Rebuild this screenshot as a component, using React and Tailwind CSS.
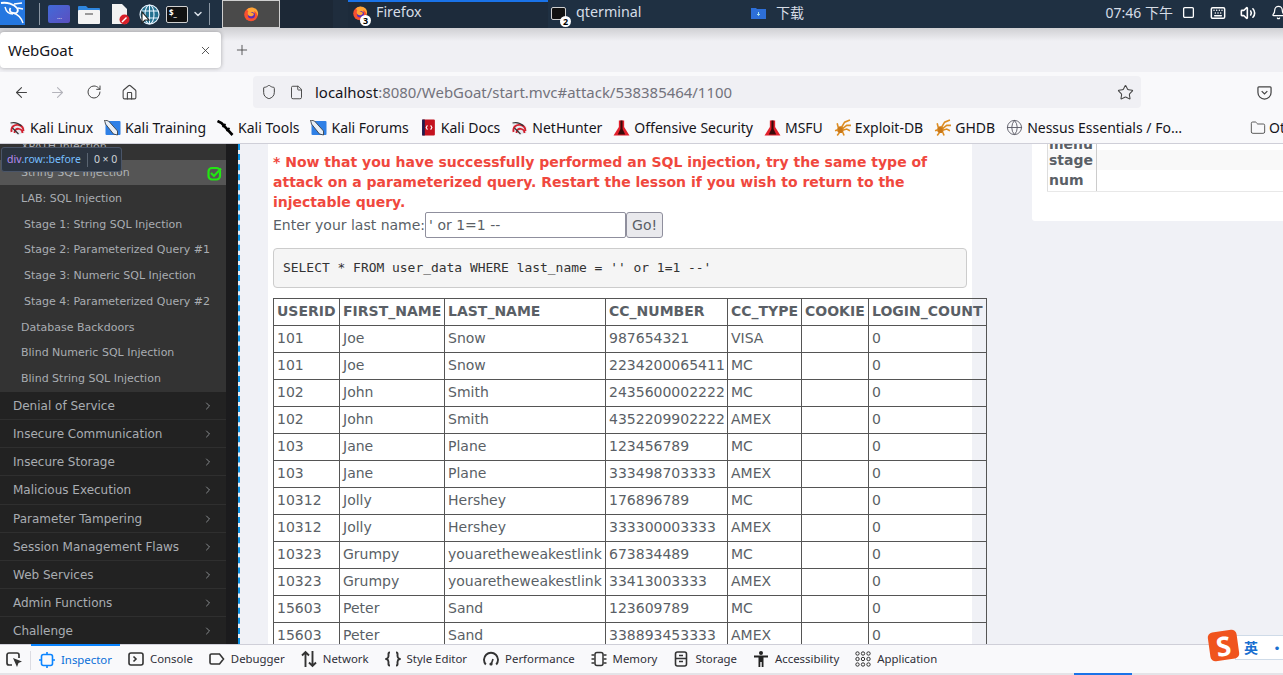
import { ArrowLeft, ArrowRight, RotateCw, House, Shield, File, Star, X, Plus, Folder, Globe, ChevronRight, ChevronDown, Volume2, Bell, Keyboard, Square } from 'lucide-react';

const chrome = { fontFamily: '"Noto Sans", sans-serif' };

const bookmarks = [
  ['dragon', 'Kali Linux'],
  ['pen', 'Kali Training'],
  ['tools', 'Kali Tools'],
  ['pen', 'Kali Forums'],
  ['docs', 'Kali Docs'],
  ['dragon', 'NetHunter'],
  ['flask', 'Offensive Security'],
  ['flask', 'MSFU'],
  ['spider', 'Exploit-DB'],
  ['spider', 'GHDB'],
  ['globe', 'Nessus Essentials / Fo…'],
];

const stages = [
  ['LAB: SQL Injection', false],
  ['Stage 1: String SQL Injection', true],
  ['Stage 2: Parameterized Query #1', true],
  ['Stage 3: Numeric SQL Injection', true],
  ['Stage 4: Parameterized Query #2', true],
  ['Database Backdoors', false],
  ['Blind Numeric SQL Injection', false],
  ['Blind String SQL Injection', false],
];

const categories = [
  'Denial of Service',
  'Insecure Communication',
  'Insecure Storage',
  'Malicious Execution',
  'Parameter Tampering',
  'Session Management Flaws',
  'Web Services',
  'Admin Functions',
  'Challenge',
];

const columns = ['USERID', 'FIRST_NAME', 'LAST_NAME', 'CC_NUMBER', 'CC_TYPE', 'COOKIE', 'LOGIN_COUNT'];

const rows = [
  ['101', 'Joe', 'Snow', '987654321', 'VISA'],
  ['101', 'Joe', 'Snow', '2234200065411', 'MC'],
  ['102', 'John', 'Smith', '2435600002222', 'MC'],
  ['102', 'John', 'Smith', '4352209902222', 'AMEX'],
  ['103', 'Jane', 'Plane', '123456789', 'MC'],
  ['103', 'Jane', 'Plane', '333498703333', 'AMEX'],
  ['10312', 'Jolly', 'Hershey', '176896789', 'MC'],
  ['10312', 'Jolly', 'Hershey', '333300003333', 'AMEX'],
  ['10323', 'Grumpy', 'youaretheweakestlink', '673834489', 'MC'],
  ['10323', 'Grumpy', 'youaretheweakestlink', '33413003333', 'AMEX'],
  ['15603', 'Peter', 'Sand', '123609789', 'MC'],
  ['15603', 'Peter', 'Sand', '338893453333', 'AMEX'],
];

const devtools = [
  ['inspector', 'Inspector'],
  ['console', 'Console'],
  ['debugger', 'Debugger'],
  ['network', 'Network'],
  ['style', 'Style Editor'],
  ['performance', 'Performance'],
  ['memory', 'Memory'],
  ['storage', 'Storage'],
  ['a11y', 'Accessibility'],
  ['application', 'Application'],
];

function FirefoxIcon({ size = 16 }) {
  return (
    <svg width={size} height={size} viewBox="0 0 16 16">
      <circle cx="8" cy="8.5" r="6.8" fill="#f9502f" />
      <circle cx="8.4" cy="9" r="3.6" fill="#5b2bb5" />
      <path d="M4 3.5C6 .8 11 .6 13.6 3.6c1.6 1.8 1.9 4.6 1 6.6-.2-2.4-1.4-4.4-3.6-5.2.6 1 .6 1.8.2 2.4C10.2 6 8.5 5.7 7.6 6.5c1.4-.1 2.9.5 3.3 2-.8 2-3.7 2.3-5.3 1C4.4 8.5 4.5 6 5.4 5 4.7 5 4.2 4.4 4 3.5z" fill="#ffa436" />
    </svg>
  );
}

function BookmarkIcon({ kind }) {
  if (kind === 'dragon') {
    return (
      <svg width="17" height="16" viewBox="0 0 16 16" fill="none">
        <path d="M1 4h11l3 3v6L8 15 2 11z" fill="#e8e8ee" />
        <path d="M2 12c-1-5 3-8 7-7 3 .5 5 3 5 6M5 13c0-3 2-5 5-4 2 .5 3 2 3 4" stroke="#d3202e" strokeWidth="1.8" />
        <path d="M1 3c4-1 8 0 11 3M3 8l6 6" stroke="#333" strokeWidth="1.1" />
      </svg>
    );
  }
  if (kind === 'pen') {
    return (
      <svg width="17" height="16" viewBox="0 0 16 16">
        <rect x="1" y="1" width="15" height="14" rx="1" fill="#2f80e6" />
        <path d="M0 0l4 1 9 10 0 4-4-1L1 4z" fill="#e8eef6" stroke="#333" strokeWidth="0.8" />
      </svg>
    );
  }
  if (kind === 'tools') {
    return (
      <svg width="17" height="16" viewBox="0 0 16 16" fill="none">
        <path d="M0 1l4 2 11 12" stroke="#000" strokeWidth="2.6" />
        <path d="M5 7l3-3M9 11l3-3" stroke="#000" strokeWidth="1.8" />
      </svg>
    );
  }
  if (kind === 'docs') {
    return (
      <svg width="17" height="17" viewBox="0 0 16 16">
        <rect x="2" y="0.5" width="12" height="15" rx="1" fill="#c4121f" />
        <rect x="2" y="0.5" width="2.5" height="15" fill="#1c1c50" />
        <path d="M7 6L5.8 8 7 10M10 6l1.2 2L10 10" stroke="#fff" strokeWidth="1" fill="none" />
      </svg>
    );
  }
  if (kind === 'flask') {
    return (
      <svg width="17" height="18" viewBox="0 0 16 16">
        <path d="M5.5 1h5v6l5 8H0.5l5-8z" fill="#e2202c" />
        <path d="M7 1h2v8l2.5 5h-7L7 9z" fill="#3a0a0a" />
      </svg>
    );
  }
  if (kind === 'spider') {
    return (
      <svg width="17" height="17" viewBox="0 0 16 16" fill="none" stroke="#dd8d22" strokeWidth="1.5">
        <ellipse cx="6" cy="10" rx="3" ry="3.2" fill="#c9781a" stroke="none" />
        <path d="M7 8l3-5 5-2M8 9l4-3 4 0M8 10.5l4-1 3 1.5M4 8L3 4M4 10l-3 1M5 13l-2 2.5M8 12l1.5 3.5" />
      </svg>
    );
  }
  return <Globe size={17} strokeWidth={1.3} className="text-[#5b5b66]" />;
}

function DevIcon({ kind }) {
  if (kind === 'inspector') {
    return (
      <svg width="16" height="16" viewBox="0 0 16 16" fill="none" stroke="#0a84ff" strokeWidth="1.6">
        <rect x="2.5" y="2.5" width="11" height="11" rx="2" />
        <path d="M8 0v2.500M8 13.500V16M0 8h2.500M13.500 8H16" />
      </svg>
    );
  }
  if (kind === 'console') {
    return (
      <svg width="16" height="16" viewBox="0 0 16 16" fill="none" stroke="#333" strokeWidth="1.6">
        <rect x="1" y="2" width="14" height="12" rx="2" />
        <path d="M5.5 5.5L8 8l-2.5 2.5" />
      </svg>
    );
  }
  if (kind === 'debugger') {
    return (
      <svg width="16" height="16" viewBox="0 0 16 16" fill="none" stroke="#333" strokeWidth="1.6">
        <path d="M2.5 3h8l4 5-4 5h-8A1.500 1.500 0 0 1 1 11.500v-7A1.500 1.500 0 0 1 2.500 3z" />
      </svg>
    );
  }
  if (kind === 'network') {
    return (
      <svg width="16" height="18" viewBox="0 0 16 18" fill="none" stroke="#333" strokeWidth="1.9">
        <path d="M4.5 17V2M1 5.500L4.500 2 8 5.500M11.500 1v15M8 12.500l3.500 3.500 3.500-3.500" />
      </svg>
    );
  }
  if (kind === 'style') {
    return (
      <svg width="16" height="16" viewBox="0 0 16 16" fill="none" stroke="#333" strokeWidth="1.9">
        <path d="M5 1.500C3 1.500 3.500 3 3.500 5S3 7.500 1.500 8C3 8.500 3.500 9 3.500 11s-.5 3.500 1.500 3.500M11 1.500c2 0 1.500 1.500 1.500 3.500s.5 2.500 2 3c-1.500.5-2 1-2 3s.5 3.500-1.500 3.500" />
      </svg>
    );
  }
  if (kind === 'performance') {
    return (
      <svg width="16" height="16" viewBox="0 0 16 16" fill="none" stroke="#333" strokeWidth="1.9">
        <path d="M2.800 13.500A7 7 0 1 1 13.200 13.500" />
        <path d="M8 14l2-6" strokeWidth="1.6" />
        <circle cx="8" cy="13" r="1.6" fill="#333" stroke="none" />
      </svg>
    );
  }
  if (kind === 'memory') {
    return (
      <svg width="16" height="16" viewBox="0 0 16 16" fill="none" stroke="#333" strokeWidth="1.5">
        <rect x="4" y="1.5" width="8" height="13" rx="2" />
        <path d="M0.500 4h3M0.500 8h3M0.500 12h3M12.500 4h3M12.500 8h3M12.500 12h3" />
      </svg>
    );
  }
  if (kind === 'storage') {
    return (
      <svg width="16" height="16" viewBox="0 0 16 16" fill="none" stroke="#333" strokeWidth="1.6">
        <rect x="2.5" y="1" width="11" height="14" rx="2" />
        <path d="M2.500 7.500h11M6 4.500h4M6 10.500h4" />
      </svg>
    );
  }
  if (kind === 'a11y') {
    return (
      <svg width="16" height="16" viewBox="0 0 16 16" fill="#222">
        <circle cx="8" cy="2" r="2" />
        <path d="M1 4.500h14v2h-4.500V16H8.700v-5H7.300v5H5.500V6.500H1z" />
      </svg>
    );
  }
  return (
    <svg width="16" height="16" viewBox="0 0 16 16" fill="none" stroke="#333" strokeWidth="1">
      {[2.5, 8, 13.5].map(y =>
        [2.5, 8, 13.5].map(x => <circle key={`${x}-${y}`} cx={x} cy={y} r="1.7" />)
      )}
    </svg>
  );
}

function TopPanel() {
  return (
    <div className="flex h-[28px] items-center bg-[#1f3042] text-[#d6dde6]" style={chrome}>
      <div className="flex h-[28px] w-[25px] items-start justify-center">
        <div className="flex h-[25px] w-[25px] items-center justify-center bg-[#2477e0]">
          <svg width="25" height="25" viewBox="0 0 25 25" fill="none" stroke="#fff" strokeWidth="1.8">
            <path d="M1 3c6-1 13 1 16 5 2 3 0 6-4 5-3-.5-4-3-2.500-5" />
            <path d="M13 13c4 1 8 4 10 10M5 7c1 4 4 7 8 7M14 4l8-1M18 8l5 1" strokeWidth="1.4" />
          </svg>
        </div>
      </div>
      <span className="ml-[14px] h-[22px] w-[1px] bg-[#8a96a3]" />
      <span className="relative ml-[8px] block h-[18px] w-[22px] rounded-[2px] bg-gradient-to-br from-[#3f6ad8] to-[#5a4fc0]">
        <span className="absolute bottom-[3px] left-[9px] text-[6px] leading-none text-white">...</span>
      </span>
      <svg width="22" height="19" viewBox="0 0 22 19" className="ml-[8px]">
        <path d="M0 2a1 1 0 0 1 1-1h7l2 2h11a1 1 0 0 1 1 1v2H0z" fill="#2e86e0" />
        <rect y="5" width="22" height="14" rx="1" fill="#f3f3f3" />
        <rect x="7" y="8" width="8" height="2" fill="#9a9a9a" />
      </svg>
      <svg width="19" height="22" viewBox="0 0 19 22" className="ml-[11px]">
        <path d="M1 1h10l5 5v15H1z" fill="#f2f2f2" />
        <circle cx="13.5" cy="16.5" r="5" fill="#d8202a" />
        <path d="M11 19l4.500-4.500" stroke="#fff" strokeWidth="1.5" />
      </svg>
      <svg width="21" height="21" viewBox="0 0 21 21" fill="none" stroke="#e8f4ff" strokeWidth="1.1" className="ml-[9px]">
        <circle cx="10.5" cy="10.5" r="9.5" fill="#23708f" />
        <ellipse cx="10.5" cy="10.5" rx="4.5" ry="9.5" />
        <path d="M2 7h17M2 14h17M10.500 1v19" />
        <path d="M3 8l0 11 3-3 4 0z" fill="#fff" stroke="#222" />
      </svg>
      <span className="ml-[6px] block h-[17px] w-[22px] rounded-[2px] border border-[#d0d0d0] bg-[#111] pl-[2px] text-[8px] font-bold leading-[11px] text-white">
        $_
      </span>
      <ChevronDown size={12} strokeWidth={3} className="ml-[4px] text-[#d6dde6]" />
      <span className="ml-[5px] h-[22px] w-[1px] bg-[#8a96a3]" />
      <div className="ml-[12px] flex h-[28px] w-[58px] items-center justify-center border border-[#cfcfcf] bg-[#4a4a4a]">
        <FirefoxIcon size={16} />
      </div>
      <div className="h-[28px] w-[53px] bg-[#1c2836]" />
      <div className="h-[28px] w-[15px] bg-[#1f2d3d]" />
      <div className="relative flex h-[28px] w-[200px] items-center border-t-2 border-[#1a73e8] bg-[#1d2b3b] pb-[7px] pl-[28px] text-[14.3px]">
        <span className="absolute left-[4px] top-[3px]"><FirefoxIcon size={16} /></span>
        <span className="absolute left-[12px] top-[13px] flex h-[11px] w-[11px] items-center justify-center rounded-full bg-white text-[9px] font-bold leading-none text-black">3</span>
        Firefox
      </div>
      <div className="relative flex h-[28px] w-[200px] items-center pb-[5px] pl-[28px] text-[14.3px]">
        <span className="absolute left-[3px] top-[7px] block h-[13px] w-[15px] rounded-[2px] border border-[#cfcfcf] bg-[#111]" />
        <span className="absolute left-[12px] top-[16px] flex h-[11px] w-[11px] items-center justify-center rounded-full bg-white text-[9px] font-bold leading-none text-black">2</span>
        qterminal
      </div>
      <div className="ml-[3px] flex h-[28px] items-center pb-[3px] text-[14px]">
        <svg width="15" height="12" viewBox="0 0 15 12"><path d="M0 1h5l1 1h9v10H0z" fill="#2d6fd8" /><path d="M7.500 5v3M6 7l1.500 1.500L9 7" stroke="#cfe" strokeWidth="0.8" fill="none" /></svg>
        <span className="ml-[10px]" style={{ fontFamily: '"Noto Sans CJK SC", sans-serif' }}>下载</span>
      </div>
      <div className="ml-auto flex h-[28px] items-center pb-[3px] text-[14px]">
        <span style={{ fontFamily: '"Noto Sans", "Noto Sans CJK SC", sans-serif' }}>07:46 下午</span>
        <Square size={13} strokeWidth={2.4} className="ml-[9px] text-white" />
        <Keyboard size={16} strokeWidth={2.2} className="ml-[15px] text-white" />
        <Volume2 size={16} strokeWidth={2.4} className="ml-[14px] text-white" />
        <Bell size={15} strokeWidth={2} className="ml-[15px] mr-[-3px] text-white" />
      </div>
    </div>
  );
}

function BrowserBar() {
  return (
    <div style={chrome} className="text-[#15141a]">
      <div className="flex h-[44px] items-start bg-gradient-to-b from-[#d0d0d3] via-[#f0f0f4] via-[30%] to-[#f0f0f4] pt-[4px]">
        <div className="flex h-[36px] w-[221px] items-center rounded-[4px] bg-white pl-[8px] pr-[9px] text-[15px] shadow-[0_0_4px_rgba(0,0,0,0.3)]">
          WebGoat
          <X size={13} strokeWidth={1.5} className="ml-auto text-[#333]" />
        </div>
        <Plus size={16} strokeWidth={1.3} className="ml-[13px] mt-[10px] text-[#444]" />
      </div>
      <div className="flex h-[40px] items-center bg-[#f9f9fb]">
        <ArrowLeft size={17} strokeWidth={1.5} className="ml-[13px] text-[#444]" />
        <ArrowRight size={17} strokeWidth={1.5} className="ml-[19px] text-[#b4b4bb]" />
        <RotateCw size={16} strokeWidth={1.5} className="ml-[20px] text-[#444]" />
        <House size={17} strokeWidth={1.5} className="ml-[19px] text-[#444]" />
        <div className="ml-[115px] flex h-[32px] w-[888px] items-center rounded-[4px] bg-[#f0f0f4] text-[14.95px]">
          <Shield size={16} strokeWidth={1.5} className="ml-[8px] text-[#444]" />
          <File size={15} strokeWidth={1.5} className="ml-[12px] text-[#444]" />
          <span className="ml-[11px] whitespace-nowrap">localhost<span className="text-[#73737c]">:8080/WebGoat/start.mvc#attack/538385464/1100</span></span>
          <Star size={17} strokeWidth={1.5} className="ml-auto mr-[7px] text-[#444]" />
        </div>
        <svg width="15" height="15" viewBox="0 0 16 16" fill="none" stroke="#444" strokeWidth="1.3" className="ml-[116px]">
          <path d="M2 2h12a1 1 0 0 1 1 1v5a7 7 0 0 1-14 0V3a1 1 0 0 1 1-1z" />
          <path d="M5 6.500L8 9.500l3-3" />
        </svg>
      </div>
      <div className="flex h-[32px] items-center overflow-hidden border-b border-[#cfcfd8] bg-[#f9f9fb] pl-[9px] text-[14px]">
        {bookmarks.map(([icon, label]) => (
          <span key={label} className="mr-[11px] flex items-center gap-[4px] whitespace-nowrap">
            <BookmarkIcon kind={icon} />
            {label}
          </span>
        ))}
        <span className="ml-auto flex shrink-0 items-center gap-[3px]">
          <Folder size={16} strokeWidth={1.3} className="text-[#444]" />
          <span className="w-[14px] overflow-hidden">Other</span>
        </span>
      </div>
    </div>
  );
}

function Sidebar() {
  return (
    <div className="w-[226px] shrink-0 overflow-hidden bg-[#222222] text-[#a9adb2]" style={{ fontFamily: '"DejaVu Sans", sans-serif' }}>
      <div className="-mt-[9px] bg-[#333333] text-[11px]">
        <div className="flex h-[25px] items-center pl-[21px]">XPATH Injection</div>
        <div className="flex h-[25px] items-center bg-[#555555] pl-[21px] pt-[1px] text-[#aeb2b6]">
          String SQL Injection
          <svg width="15" height="15" viewBox="0 0 15 15" fill="none" stroke="#22e612" strokeWidth="2.2" className="ml-auto mr-[4px]">
            <rect x="1.5" y="2" width="11.5" height="11.5" rx="3.5" />
            <path d="M4 7l3 3L14 2.500" />
          </svg>
        </div>
        <div className="pt-[1.5px]">
          {stages.map(([label, indent]) => (
            <div key={label} className={`flex h-[25.7px] items-center whitespace-nowrap ${indent ? 'pl-[24px]' : 'pl-[21px]'}`}>
              {label}
            </div>
          ))}
        </div>
      </div>
      <div className="text-[12px]">
        {categories.map(label => (
          <div key={label} className="flex h-[28.15px] items-center border-b border-[#2f2f2f] pl-[13px] pr-[12px] pt-[1px]">
            {label}
            <ChevronRight size={12} strokeWidth={1.5} className="ml-auto" />
          </div>
        ))}
      </div>
    </div>
  );
}

function ResultsTable() {
  const widths = ['w-[66px]', 'w-[105px]', 'w-[161px]', 'w-[122px]', 'w-[74px]', 'w-[67px]', 'w-[118px]'];
  return (
    <table className="mt-[10px] w-[713px] table-fixed border-collapse text-[14px] text-[#5a5f66]">
      <thead>
        <tr className="h-[27px]">
          {columns.map((col, i) => (
            <th key={col} className={`${widths[i]} overflow-visible border border-[#555555] pb-[2px] pl-[3px] text-left font-bold whitespace-nowrap`}>{col}</th>
          ))}
        </tr>
      </thead>
      <tbody>
        {rows.map((row, i) => (
          <tr key={i} className="h-[27px]">
            {row.map((cell, j) => (
              <td key={j} className="border border-[#555555] pb-[2px] pl-[3px] whitespace-nowrap">{cell}</td>
            ))}
            <td className="border border-[#555555]" />
            <td className="border border-[#555555] pb-[2px] pl-[3px]">0</td>
          </tr>
        ))}
      </tbody>
    </table>
  );
}

function LessonPanel() {
  return (
    <div className="ml-[28px] w-[704px] shrink-0 self-stretch bg-white pl-[5px] pt-[8px] text-[14px] text-[#5a5f66]">
      <div className="w-[690px] text-[14px] font-bold leading-[20px] text-[#f0483e]">
        * Now that you have successfully performed an SQL injection, try the same type of attack on a parameterized query. Restart the lesson if you wish to return to the injectable query.
      </div>
      <div className="flex h-[26px] items-center">
        <span>Enter your last name:</span>
        <input
          readOnly
          value="' or 1=1 --"
          className="h-[26px] w-[201px] rounded-[2px] border border-[#8f8f9d] bg-white pl-[3px] text-[14px] text-[#5a5f66] outline-none"
        />
        <button className="h-[26px] w-[37px] rounded-[3px] border border-[#8f8f9d] bg-[#e9e9ed] text-[14px] text-[#5a5f66]">Go!</button>
      </div>
      <div
        className="mt-[10px] flex h-[40px] w-[694px] items-center rounded-[4px] border border-[#cccccc] bg-[#f5f5f5] pl-[9px] text-[12.94px] text-[#333333]"
        style={{ fontFamily: '"DejaVu Sans Mono", monospace' }}
      >
        {"SELECT * FROM user_data WHERE last_name = '' or 1=1 --'"}
      </div>
      <ResultsTable />
    </div>
  );
}

function ParamsPanel() {
  return (
    <div className="ml-[60px] h-[77px] w-[251px] shrink-0 rounded-bl-[3px] bg-white pl-[15px] text-[14px] font-bold text-[#5a5f66]">
      <div className="border-b border-[#e8e8e8]">
        <div className="-mt-[4px] flex h-[10px] border-l border-[#dddddd]">
          <span className="-mt-[6px] w-[48px] pl-[1px]">menu</span>
          <span className="flex-1 border-l border-[#cccccc]" />
        </div>
        <div className="flex h-[20px] items-center border-l border-[#dddddd] bg-[#f9f9f9]">
          <span className="w-[48px] pl-[1px]">stage</span>
          <span className="h-full flex-1 border-l border-[#cccccc]" />
        </div>
        <div className="flex h-[21px] items-center border-l border-[#dddddd]">
          <span className="w-[48px] pl-[1px]">num</span>
          <span className="h-full flex-1 border-l border-[#cccccc]" />
        </div>
      </div>
    </div>
  );
}

function DevToolsBar() {
  return (
    <div className="relative flex h-[31px] items-start border-t border-[#cfcfd8] bg-[#f9f9fb] text-[11.4px] text-[#2f2f38]" style={chrome}>
      <svg width="17" height="16" viewBox="0 0 17 16" fill="none" stroke="#333" strokeWidth="1.7" className="ml-[6px] mt-[7px]">
        <path d="M6 13H3a2 2 0 0 1-2-2V3a2 2 0 0 1 2-2h8a2 2 0 0 1 2 2v3" />
        <path d="M7 6l9 3.500-3.500 1.500L11 15z" fill="#333" stroke="none" />
      </svg>
      <span className="ml-[7px] mt-[6px] h-[19px] w-[1px] bg-[#dcdce2]" />
      {devtools.map(([icon, label], i) => (
        <div
          key={label}
          className={`-mt-[1px] flex h-[30px] items-center gap-[6px] whitespace-nowrap px-[8px] ${i === 0 ? 'border-t-2 border-[#0a84ff] text-[#0a6fd8]' : ''}`}
        >
          <DevIcon kind={icon} />
          {label}
        </div>
      ))}
      {/* sogou input method badge sits over the bar */}
      <div className="absolute right-0 top-[-10px] flex h-[25px] w-[48px] items-center border border-r-0 border-[#cfdbe8] bg-white pl-[8px]" style={{ fontFamily: '"Noto Sans CJK SC", sans-serif' }}>
        <span className="text-[14px] font-bold text-[#1a6fd0]">英</span>
        <span className="ml-[12px] text-[14px] font-bold text-[#1a6fd0]">•,</span>
      </div>
      <div className="absolute right-[45px] top-[-14px] flex h-[29px] w-[29px] rotate-[-8deg] items-center justify-center rounded-[5px] bg-[#f0541e] text-[27px] font-bold leading-none text-white">
        S
      </div>
      <span className="absolute bottom-0 left-0 h-[2px] w-full bg-[#e4e4e8]" />
      <span className="absolute bottom-0 right-[151px] h-[2px] w-[58px] bg-[#1a73e8]" />
    </div>
  );
}

export default function App() {
  return (
    <div className="flex h-[675px] w-[1283px] flex-col overflow-hidden bg-[#f0f1f6]">
      <TopPanel />
      <BrowserBar />
      <div className="relative flex h-[500px] overflow-hidden" style={{ fontFamily: '"DejaVu Sans", sans-serif' }}>
        <Sidebar />
        <div className="w-[12px] shrink-0 bg-[#1b1b1d]" />
        <div className="w-[1px] shrink-0 border-l-2 border-dashed border-[#0a8fe0]" />
        <LessonPanel />
        <ParamsPanel />
        <div className="absolute left-[1px] top-[3px] flex h-[25px] w-[121px] items-center whitespace-nowrap rounded-[3px] border border-[#4a5568] bg-[#2b3440] pl-[5px] text-[10.5px]" style={chrome}>
          <span className="text-[#b98cf0]">div</span>
          <span className="text-[#75bfff]">.row::before</span>
          <span className="mx-[6px] h-[14px] w-[1px] bg-[#5a6572]" />
          <span className="text-[#d0d4d8]">0 × 0</span>
        </div>
      </div>
      <DevToolsBar />
    </div>
  );
}
